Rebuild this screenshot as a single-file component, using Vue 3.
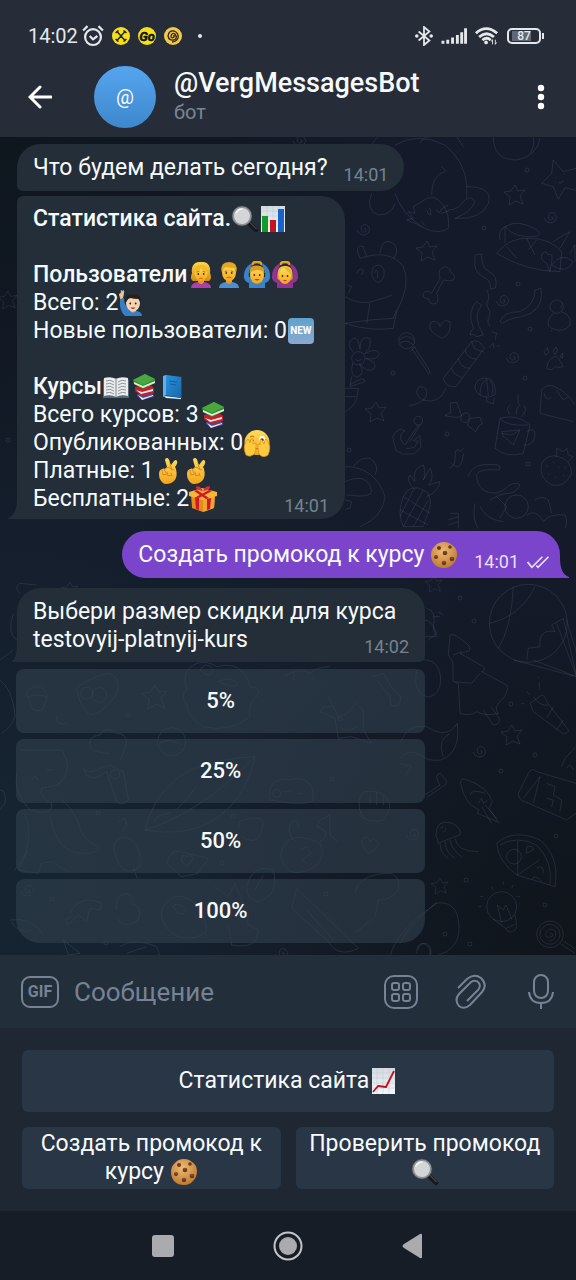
<script setup>
import { ref } from 'vue'

const draft = ref('')

const statistics = [
  { text: 'Статистика сайта.', bold: true, emoji: ['lens', 'bars'] },
  { text: '' },
  { text: 'Пользователи', bold: true, emoji: ['woman', 'man', 'man-ok', 'woman-ok'] },
  { text: 'Всего: 2', emoji: ['man-hand'] },
  { text: 'Новые пользователи: 0', badge: 'NEW' },
  { text: '' },
  { text: 'Курсы', bold: true, emoji: ['open-book', 'books', 'blue-book'] },
  { text: 'Всего курсов: 3', emoji: ['books'] },
  { text: 'Опубликованных: 0', emoji: ['peek'] },
  { text: 'Платные: 1', emoji: ['fingers', 'fingers'] },
  { text: 'Бесплатные: 2', emoji: ['gift'], time: '14:01' },
]

const discounts = ['5%', '25%', '50%', '100%']

const keyboard = [
  { label: 'Статистика сайта', emoji: 'growth', wide: true },
  { label: 'Создать промокод к курсу ', emoji: 'cookie' },
  { label: 'Проверить промокод ', emoji: 'lens' },
]

const stars = [
  [515, 195, 1], [427, 251, 1], [376, 412, 1], [512, 735, 1], [440, 886, 0.8],
  [155, 697, 1.2], [434, 584, 0.8], [8, 300, 0.9], [70, 590, 0.8],
]
const swirls = [
  [364, 229], [551, 217], [503, 300], [513, 357], [480, 751], [413, 834], [28, 890], [282, 953], [300, 140],
]
const dots = [
  [484, 228], [527, 170], [518, 284], [530, 329], [525, 378], [447, 434], [528, 464], [393, 373],
  [460, 598], [474, 621], [511, 704], [535, 755], [501, 771], [556, 836], [466, 880], [545, 905],
  [445, 934], [332, 779], [222, 863], [52, 899], [98, 813], [106, 943], [340, 719], [128, 715], [326, 894],
  [8, 440], [349, 450], [233, 816], [470, 944],
]
</script>

<template>
  <div class="phone">
    <svg class="sprite" width="0" height="0" aria-hidden="true">
      <defs>
        <linearGradient id="g-skin" x1="0" y1="0" x2="0" y2="1">
          <stop offset="0" stop-color="#ffdc5c" /><stop offset="1" stop-color="#f3a51c" />
        </linearGradient>
        <linearGradient id="g-hair" x1="0" y1="0" x2="0" y2="1">
          <stop offset="0" stop-color="#ffd84a" /><stop offset="1" stop-color="#d58b10" />
        </linearGradient>
        <linearGradient id="g-paper" x1="0" y1="0" x2="0" y2="1">
          <stop offset="0" stop-color="#d3dae1" /><stop offset="1" stop-color="#f4f6f8" />
        </linearGradient>
        <linearGradient id="g-book" x1="0" y1="0" x2="1" y2="1">
          <stop offset="0" stop-color="#2a93dc" /><stop offset="1" stop-color="#1767aa" />
        </linearGradient>
        <radialGradient id="g-cookie" cx=".45" cy=".35" r=".65">
          <stop offset="0" stop-color="#eebb73" /><stop offset="1" stop-color="#bf7a35" />
        </radialGradient>
      </defs>

      <symbol id="e-lens" viewBox="0 0 28 28">
        <path d="M17 17l8 8" stroke="#17191c" stroke-width="4.500" stroke-linecap="round" />
        <path d="M18.500 17l7 7" stroke="#5b6065" stroke-width="1" />
        <circle cx="11" cy="11" r="9" fill="#d3d5d7" stroke="#8d9297" stroke-width="2" />
        <circle cx="11" cy="11" r="10" fill="none" stroke="#44494d" stroke-width=".6" />
        <path d="M5 8q2-4 6-4" fill="none" stroke="#f4f5f6" stroke-width="1.500" stroke-linecap="round" />
      </symbol>

      <symbol id="e-bars" viewBox="0 0 28 28">
        <path d="M2 1h24v26H2z" fill="url(#g-paper)" />
        <path d="M2 6h24M2 11h24M2 16h24M2 21h24M8 1v26M14 1v26M20 1v26" stroke="#bec8d1" stroke-width=".5" />
        <path d="M3 11h6v16H3z" fill="#129b28" />
        <path d="M11 15h6v12h-6z" fill="#c61222" />
        <path d="M19 4h6v23h-6z" fill="#1763ca" />
      </symbol>

      <symbol id="e-woman" viewBox="0 0 28 28">
        <path d="M14 1C6 0 4 7 5 12c-1 3-2 6 1 8h16c3-2 2-5 1-8 1-5-1-12-9-11z" fill="url(#g-hair)" />
        <path d="M4 27q0-5 7-6h6q7 1 7 6z" fill="#ad3fa7" />
        <path d="M11 17h6v4q-3 4-6 0z" fill="#e99820" />
        <ellipse cx="14" cy="12.500" rx="6.500" ry="7.500" fill="url(#g-skin)" />
        <path d="M7 12Q7 4 14 4q7 0 7 8-5-2-7-5-2 4-7 5z" fill="#f1b92b" />
        <path d="M10 11l2-.5M18 11l-2-.5M12.500 17.500q1.500-1 3 0" stroke="#a05b0b" stroke-width=".7" fill="none" stroke-linecap="round" />
        <circle cx="11.300" cy="13" r=".9" fill="#4d2c10" /><circle cx="16.700" cy="13" r=".9" fill="#4d2c10" />
      </symbol>

      <symbol id="e-man" viewBox="0 0 28 28">
        <path d="M4 27q0-5 7-6h6q7 1 7 6z" fill="#4f8dd3" />
        <path d="M11 17h6v4q-3 4-6 0z" fill="#e99820" />
        <ellipse cx="14" cy="11.500" rx="7" ry="8.800" fill="url(#g-skin)" />
        <path d="M6.500 11Q5 1 14 1t7.500 10l-2-4q-5 0-8-1-3 1-3 2z" fill="#e3a823" />
        <path d="M10 10.500l2-.5M18 10.500l-2-.5M12 16.500q2-1 4 0" stroke="#925209" stroke-width=".7" fill="none" stroke-linecap="round" />
        <circle cx="11.300" cy="12" r=".9" fill="#4d2c10" /><circle cx="16.700" cy="12" r=".9" fill="#4d2c10" />
      </symbol>

      <symbol id="e-man-ok" viewBox="0 0 28 28">
        <path d="M10 4q-1-3 4-3t4 3" fill="none" stroke="#eaa226" stroke-width="2.500" />
        <path d="M9 2Q0 7 1 17q1 4 5 5v5h16v-5q4-1 5-5 1-10-8-15 0 3 1 5 3 3 2 9H6q-1-6 2-9 1-2 1-5z" fill="#3a83c8" />
        <ellipse cx="14" cy="14" rx="7" ry="8.800" fill="url(#g-skin)" />
        <path d="M6.500 12Q6 4.500 14 4.500t7.500 7.500q-3-3-7.500-3t-7.500 3z" fill="#d99b20" />
        <circle cx="11.300" cy="14" r=".9" fill="#4d2c10" /><circle cx="16.700" cy="14" r=".9" fill="#4d2c10" />
        <path d="M11.500 18h5q-2.500 3-5 0z" fill="#a14b17" />
      </symbol>

      <symbol id="e-woman-ok" viewBox="0 0 28 28">
        <path d="M10 4q-1-3 4-3t4 3" fill="none" stroke="#eaa226" stroke-width="2.500" />
        <path d="M9 2Q0 7 1 17q1 4 5 5v5h16v-5q4-1 5-5 1-10-8-15 0 3 1 5 3 3 2 9H6q-1-6 2-9 1-2 1-5z" fill="#903393" />
        <path d="M6.500 18Q5 5 14 5t7.500 13q-7.500 7-15 0z" fill="url(#g-hair)" />
        <ellipse cx="14" cy="15" rx="6" ry="8" fill="url(#g-skin)" />
        <path d="M7.500 14q1-7 5.500-8 3 5 7.500 7-.5-7-6.500-7-7 0-6.500 8z" fill="#eeb230" />
        <circle cx="11.500" cy="15" r=".9" fill="#4d2c10" /><circle cx="16.500" cy="15" r=".9" fill="#4d2c10" />
        <path d="M12 19h4q-2 2.500-4 0z" fill="#c23a31" />
      </symbol>

      <symbol id="e-man-hand" viewBox="0 0 28 28">
        <path d="M2 10l4-1q0 6 3 9l10 4q5 1 5 5H7Q1 22 2 10z" fill="#367fc7" />
        <path d="M2.500 9.500L1.500 5l1-.5.800 1.500V1.500l.700 3.500 1-3.500.700.5-.5 4-.7 3z" fill="#f2c6a2" stroke="#efc29d" />
        <path d="M12 19h6v3q-3 3-6 0z" fill="#deaa82" />
        <ellipse cx="15" cy="14" rx="7" ry="8.500" fill="#f6d3b4" />
        <path d="M7.500 14Q6 5 15 5t7.500 9l-2-4q-5 0-8-1-3 1-3 2z" fill="#25201f" />
        <circle cx="12.300" cy="14.500" r=".9" fill="#2a1b15" /><circle cx="17.700" cy="14.500" r=".9" fill="#2a1b15" />
        <path d="M12.500 18.500h5q-2.500 3-5 0z" fill="#9a4032" />
      </symbol>

      <symbol id="e-open-book" viewBox="0 0 28 28">
        <path d="M1 7l2-2h22l2 2v18H1z" fill="#536a79" />
        <path d="M2 5q7-2 12 1 5-3 12-1v18q-7-2-12 1-5-3-12-1z" fill="#e9ebec" />
        <path d="M14 6v18" stroke="#7f878c" />
        <path d="M4 8q4-2 8 1M4 11q4-2 8 1M4 14q4-2 8 1M4 17q4-2 8 1M4 20q4-2 8 1M16 9q4-3 8-1M16 12q4-3 8-1M16 15q4-3 8-1M16 18q4-3 8-1M16 21q4-3 8-1" stroke="#7b8388" stroke-width=".8" fill="none" />
      </symbol>

      <symbol id="e-books" viewBox="0 0 28 28">
        <path d="M7 21l14-2 3 3v2l-12 3-5-4z" fill="#4c4795" />
        <path d="M8 22l5 3 10-3v1l-11 4z" fill="#eceaf3" />
        <path d="M5 14l14-3 5 4v5l-12 3-7-5z" fill="#c4202a" />
        <path d="M6 17l6 2 11-3v2l-12 3z" fill="#f5e9e8" />
        <path d="M3 7L15 1l10 5v4l-12 6-9-5z" fill="#2c8c2f" />
        <path d="M4 9l9 4 12-5v2l-12 5-9-4z" fill="#e2eddb" />
        <path d="M3 7L15 1l10 5-12 6z" fill="#48a83e" />
      </symbol>

      <symbol id="e-blue-book" viewBox="0 0 28 28">
        <path d="M5 3l3-1 16 2v21l-2 2L5 24z" fill="#124f86" />
        <path d="M6 23l17 2v1L8 25z" fill="#eef3f8" />
        <path d="M8 2l15 2v21L8 22z" fill="url(#g-book)" />
        <path d="M5 3l3-1v20l-3 2z" fill="#5db1ec" />
        <path d="M11 8l8 1M12 11l6 1" stroke="#145d9a" />
      </symbol>

      <symbol id="e-peek" viewBox="0 0 28 28">
        <circle cx="14" cy="13.500" r="12.500" fill="url(#g-skin)" />
        <ellipse cx="19" cy="10.500" rx="3" ry="3.500" fill="#fff" />
        <circle cx="19" cy="11" r="1.800" fill="#4b3628" />
        <path d="M7 8q2-2 4 0M7 11q2 2 4 0M13 20q1.500-1 3 0" stroke="#a96c0d" fill="none" />
        <path d="M3 26q-3-7-1-11l2-4q1-2 2 0l1 3 1-4q1-1 2 0v5l2-1q2 0 1 3l-1 7q-4 5-9 2z" fill="#ffc93f" stroke="#d8911b" stroke-width=".7" />
        <path d="M25 26q3-7 1-11l-2-4q-1-2-2 0l-1 4-2-4q-1-1-2 0v5l-1-1q-2 0-1 3l1 7q4 5 9 1z" fill="#ffc93f" stroke="#d8911b" stroke-width=".7" />
      </symbol>

      <symbol id="e-fingers" viewBox="0 0 28 28">
        <path d="M9 26q-4-3-4-9 0-4 3-5 2-1 3 0l2-2-2-7q0-2 2-2t3 5l1 2 3-4q2-2 3 0t-2 6l1 2q2 8-2 12-3 3-8 3-2 0-3-1z" fill="url(#g-skin)" />
        <path d="M16 7l2 6M11 12l3-2 6 3M8 13l1 5 4-1M13 15l1 4 3-1M17 16l1 3M10 12l2 4" stroke="#cf8714" stroke-width=".9" fill="none" stroke-linecap="round" />
      </symbol>

      <symbol id="e-gift" viewBox="0 0 28 28">
        <path d="M2 10l12 4 12-4-1 13-11 4-11-4z" fill="#e58b1b" />
        <path d="M14 14l12-4-1 13-11 4z" fill="#f0a52e" />
        <path d="M0 7l13-4 15 4v4l-14 4L0 11z" fill="#f6b638" />
        <path d="M6 12l4 1v12l-3-1zM18 14l4-1-1 11-3 1zM5 6l3-1 12 8-3 1zM20 5l3 1-13 7-3-1z" fill="#cf1828" />
        <path d="M14 6Q6 5 7 1.500q4-1.500 7 4.500 3-6 7-4.500Q22 5 14 6z" fill="#e5283a" />
      </symbol>

      <symbol id="e-cookie" viewBox="0 0 28 28">
        <path d="M14 1q5 0 8 3 5 3 5 9 0 6-4 10-3 4-9 4-6 0-9-3-4-4-4-10 0-6 4-9 3-4 9-4z" fill="url(#g-cookie)" />
        <g fill="#69391d">
          <circle cx="9" cy="7" r="2" /><circle cx="20" cy="6" r="1.800" /><circle cx="15" cy="12" r="2.300" />
          <circle cx="6" cy="16" r="2" /><circle cx="22" cy="18" r="2.300" /><circle cx="14" cy="22" r="2.200" />
        </g>
        <path d="M14 11h2M5 15h2M13 21h2M21 17h2" stroke="#a3693e" stroke-width=".8" />
      </symbol>

      <symbol id="e-growth" viewBox="0 0 28 28">
        <path d="M3 1h23v26H3z" fill="url(#g-paper)" />
        <path d="M3 6h23M3 11h23M3 16h23M3 21h23M8 1v26M14 1v26M20 1v26" stroke="#c2c9d1" stroke-width=".5" />
        <path d="M4 25l5-6 8 1 8-16" stroke="#b71424" stroke-width="1.800" fill="none" stroke-linejoin="round" />
      </symbol>

      <symbol id="d-star" viewBox="-12 -12 24 24" overflow="visible">
        <path d="M0-10l3 6 7-1-5 6 3 8-7-3-7 4 1-8-6-5 7-1z" stroke-linejoin="round" />
      </symbol>
      <symbol id="d-swirl" viewBox="-10 -10 20 20" overflow="visible">
        <path d="M0 0q3-1 2 2-4 3-5-2 1-6 6-4 5 5 0 9-7 3-10-4" />
      </symbol>
    </svg>

    <header class="top">
      <div class="status">
        <span class="clock">14:02</span>
        <svg class="alarm" viewBox="0 0 20 20" aria-hidden="true">
          <circle cx="10" cy="11" r="7.200" /><path d="M1 5l4-4M19 5l-4-4M7 10l3 3 4-3" />
        </svg>
        <svg class="coin" viewBox="0 0 18 18" aria-hidden="true">
          <circle cx="9" cy="9" r="9" fill="#f7df1d" />
          <path d="M4.500 4l4.500 5 4.500-5M4.500 14L9 9l4.500 5M3.500 6l3-2.500M14.500 6l-3-2.500M3.500 12l3 2.500M14.500 12l-3 2.500" fill="none" stroke="#22210f" stroke-width="1.500" />
        </svg>
        <svg class="coin" viewBox="0 0 18 18" aria-hidden="true">
          <circle cx="9" cy="9" r="9" fill="#f7df1d" />
          <text x="9" y="13.500" text-anchor="middle" font-size="13" font-style="italic" font-weight="700" fill="#12130d" stroke="#12130d" stroke-width=".5">Go</text>
        </svg>
        <svg class="coin" viewBox="0 0 18 18" aria-hidden="true">
          <circle cx="9" cy="9" r="9" fill="#f4c94b" />
          <path d="M9 9q2-1 1 1-3 2-3-1 1-4 4-2 3 4-1 6-5 1-6-4 1-6 6-5 5 2 4 7-2 4-6 4" fill="none" stroke="#2b2415" stroke-width="1.300" />
        </svg>
        <span class="more"></span>
        <svg class="bluetooth" viewBox="0 0 20 22" aria-hidden="true">
          <path d="M4 6l12 10-6 5V1l6 5L4 16" /><circle cx="2" cy="11" r="1" /><circle cx="18" cy="11" r="1" />
        </svg>
        <svg class="signal" viewBox="0 0 27 18" aria-hidden="true">
          <path d="M2 17v-3M7 17v-4M12 17v-6.500M17 17V8M21.500 17V5M25.500 17V1" />
        </svg>
        <svg class="wifi" viewBox="0 0 26 20" aria-hidden="true">
          <path d="M1 7q11-10 23 0M4.500 11q8-7 16 0M8 14.500q5-4 9 0" />
          <circle cx="12" cy="17" r="2" class="solid" />
          <path d="M19 14v5M22 19v-5M17.500 16l1.500-2M23.500 17L22 19" class="thin" />
        </svg>
        <span class="battery">87</span>
      </div>
      <div class="title-row">
        <button class="plain back" type="button" aria-label="Назад">
          <svg width="24" height="24" viewBox="0 0 24 24"><path d="M23 12H3M12 2L2 12l10 10" /></svg>
        </button>
        <div class="avatar">@</div>
        <div class="title">
          <h1>@VergMessagesBot</h1>
          <p>бот</p>
        </div>
        <button class="plain menu" type="button" aria-label="Меню">
          <svg width="8" height="26" viewBox="0 0 8 26"><circle cx="4" cy="4" r="3.200" /><circle cx="4" cy="13" r="3.200" /><circle cx="4" cy="22" r="3.200" /></svg>
        </button>
      </div>
    </header>

    <main class="chat">
      <svg class="wallpaper" viewBox="0 137 576 818" preserveAspectRatio="xMidYMin slice" aria-hidden="true">
        <use v-for="([x, y, s], i) in stars" :key="'s' + i" href="#d-star" :x="x - 12 * s" :y="y - 12 * s" :width="24 * s" :height="24 * s" />
        <use v-for="([x, y], i) in swirls" :key="'w' + i" href="#d-swirl" :x="x - 10" :y="y - 10" width="20" height="20" />
        <circle v-for="([x, y], i) in dots" :key="'d' + i" :cx="x" :cy="y" r="2" />

        <!-- upper right field -->
        <g transform="translate(340 130) scale(.3333)" class="big">
          <path d="M90 60Q100 20 130 15M165 45q70-40 150 0 60 50 65 120v40M275 195q0-60 40-70M305 110l15 15M95 190q-20 50 20 65 40 0 50-35M165 190q20 60 80 100M380 170q80 0 65 50-20 50-100 45 50-20 60-50-10-20-30-5-20 30-50 30" />
          <path d="M245 215q35-30 65 10 20 30 15 70-30 20-70 0-40-20-55-25l20-5-15-20 20 5-5-20zM260 240q5 15 12 15 2-20-5-20M290 240q8 15 15 0M300 240l25-15M305 250l22-8M245 275l8 10" />
          <path d="M460 20q0 70 70 70 60-10 70-65M580 20q5 30-10 50M240 40q10-20 30-20M350 20l20 30" />
          <path d="M605 160l30-30 5-40 30 35 38-10M605 160l35 10 15 38 20-35 33 8M648 140v4M672 130v4M655 158q10 5 15-6" />
          <path d="M495 290q40-25 95 10 20 15-5 20-60 5-90-30zM495 290v50M480 330q-5-30 15-40M470 370q40-50 100-45 60 0 95 40l-5 60q-100 0-190-55zM500 350l30 35M560 325l25 50M590 330l-25 30M640 335q20-15 50-30l-30 50M605 375q10-20 20 0 15-10 10 20l-5 30-10-25q-20-10-15-25M635 405q30-40 65-10-20 40-65 10M690 370l15-25v50" />
          <path d="M60 385q-20-45 10-35l10 30M120 370q5-50 40-30 20 20 0 45M60 385q90-30 130 25 25 50-20 135l-10 50q-70 10-145-15l75-10 70-5 10-25M15 500q50 30 95 10 25-5 45-15M50 430q10-20 20-10l-5 15M95 435q0-30 20-30 25 5 15 40-20 30-35-10M105 430q0-15 8-5v20M20 465l15 5-10 20M90 520l-10 60" />
          <path d="M275 490l25-45q-10-30 15-35 20 5 15 15 20 10 10 25-10 5-30 0l-20 40q10 25-5 32-20 0-18-15-20 0-17-17 10-12 25 0z" />
          <path d="M405 385q-5-15 20-12 0 40 20 50 30 15 22 50l-15 5q0-30-20-35-35-20-27-58zM440 480q10 15 5 30-10 12 0 25 10 15 0 30-5 10 5 25M410 515l15 10q-30 30 5 90l-20 5q-10-10-20-5 0-10 10-20-20-50 10-80zM480 575q10-30 60-30 45-20 45-65l18-5q10 70-60 85-35 5-55 20z" />
          <circle cx="650" cy="530" r="20" /><path d="M640 550q-30 30-5 45 40 15 55-10 5-30-25-40M668 525l-8 10M635 600v5M655 600v5" />
          <path d="M305 625q-50-25-30-50 20-5 25 15 10-25 30-15 5 40-25 50z" />
          <circle cx="200" cy="632" r="24" /><path d="M178 630q20-20 44 0M180 640q20-15 40 5M215 655l50 75q8 5 3-10l-45-70zM210 665l15-15" />
          <path d="M310 745l85-110q20-10 38 20l-85 115q-30 5-38-25zM395 635l8 20 30 12M375 660q5 25 35 28M355 685q5 30 35 30M335 715q5 20 33 28M318 775q-20 50-70 35-30-20-10-40 30 0 20 30-10 20-52 28M455 605l15 5-5 20M445 655l15-15 2 15M470 648h10" />
          <circle cx="55" cy="685" r="20" /><path d="M40 668q-25-30 0-42 15-10 20 32 0-45 30-32 5 25-15 45 35-20 43 0-5 20-40 15 35 10 25 30-20 15-45-15 20 30-5 40-25 0-15-42M15 700q-30 20 0 35M35 740l-5 30 45-15q0-20-45 10M15 775h40q0 50-40 70M15 800h35M45 687q10 10 20 0" />
          <path d="M612 665l10-12 5 15-10 8zM640 665l8-14 5 10-8 13zM660 680l8-10v14zM625 695q20-25 30-10l15 25q-15 5-25 0-10 15-25 5z" />
          <path d="M405 770q5-30 40-25 25 10 20 50-20 10-35 5-25-10-25-30zM420 795q0-35 20-48l5 50M450 750q15 20 5 45M440 800v15l20 7 3-20" />
          <path d="M330 820l20-3 15 40q-10 10-50 0l18-10zM365 855q20-15 25 5-10 30-28 10zM390 865l30-3 7 20-10 5-10 18-25-20z" />
          <circle cx="235" cy="872" r="13" /><path d="M235 885l-40 60q-20-15-10-35l10-8-15-5q-20 10-22 25l10 40 20 10h35l20-20-3-35-20 15 15 2-12 18-25 5M240 885l-30 50" />
          <path d="M480 865q50-15 90 20l-20 85q-50 15-85-15zM480 865q20 25 85 20M560 905q25-15 25 10-5 35-35 30M485 905l55-5-20 45-15-15-15-10zM485 910l30 5 25-15M510 855q-15-20 0-30M530 855q-5-20 10-30-10-10-5-30M545 860q20-20 5-35" />
          <path d="M605 780q15-20 40-10 40 20 60 55M605 780l-5 70 100 25M612 790q10 30 22 10M650 780l20 30 15-10" />
          <path d="M328 1015q20-5 18-50 10-10 15 0l10-10M335 1000q30 30 35-30M605 1000q20-30 50-20 40 10 40 50-20 45-60 35-40-20-30-65zM650 980v-25l20 10 10-10 5 20 15 5-15 15M620 1005l3 5M640 995l3 5M655 1010l3 5M625 1030l3 5M645 1040l3 5M675 1010l3 5M670 1035l3 5" />
          <path d="M190 1100q20-40 60-20 25 10 20 50l-20 60h-60q-20-40 0-90zM190 1100l80 50M180 1140l85 45M220 1080l-40 80M250 1080l-60 110M265 1110l-45 80M225 1080q-30-30-15-45l15 20q-10-40 25-50 10 30 0 45l20-35q15 30-5 50l35-10q-5 30-40 45" />
          <path d="M40 1010q20-30 50-25 30 20 15 50M15 1010q90 0 120 90-5 60-75 90M15 1055q70-30 80 30-5 20-75 10M15 1110l20 5-5 20-15 3M385 1040q10-45 90-35 10 15 0 15-60-5-65 15 0 30 20 45 40 25 80-15 20-10 30 0-10 20-30 25-30 0-60 20M405 1120q-10 50 10 75M420 1130q20 40 70 45" />
          <circle cx="530" cy="1130" r="35" /><path d="M470 1100l30 30-20 35M585 1110q20-15 40 0l10 40M560 1155q30-20 50 20 20-25 65-20 10 20 0 40M330 1150h25v45M325 1170l30-10M325 1185l30-10" />
        </g>

        <!-- lower right field -->
        <g transform="translate(400 580) scale(.3333)" class="big">
          <circle cx="385" cy="130" r="117" /><path d="M340 20q-5 120-45 185M268 130Q360 110 405 20M340 240l190 50L490 115l-35 20 10 20q-50-10-45 45l-35 5-5 35M400 240l130 50L470 130M500 120l30 100" />
          <path d="M145 225l5-60q10-10 55 30 10 20-5 20l-20 5 70 40q10 10-5 15l75 40q10 20-20 50-20 20-5 35-40 10-65-5-20 15-50 5l-5-90-15-5-2-60zM160 225l25-10M165 305l50 5 25-30M250 390l30 45q20 0 18-20l-25-35" />
          <path d="M390 370l35-25q10 0 15 20l65 85q0 10-15 12L400 395zM400 350q20 30 45 25M460 380l-20 35M490 420l-20 30M415 290v5M418 305v25M380 335l10 10M363 370h10" />
          <path d="M50 240q70-10 72 60 0 40-35 52-50-10-37-80M0 490q20-60 80-50 60 40 92-10 10 90-50 110-40 5-60-15-40-20-60 10M150 460q-40 20-20 70M0 550l35 10-20 25" />
          <path d="M75 645l45-30q-20-30 0-35l10 10 10 15q0 10-10 13l-50 35M182 610q0-20 20-10 60 20 75 65l-10 20 30 45M182 610q10 60 55 80l-5 10 60 25M210 645q5-20 45-5M245 680l30 50M255 675l35 40M235 670l10-15 5 15 12-10" />
          <path d="M355 640l30-60q10-20 25-5l118 35M355 640q0 20 20 25l125 55 28-20M370 655l50-65M400 670l20-80M440 610l25 10-5 25 25 15-5 35M440 655l20 5-5 20M485 560l10-25 33-35M500 565q10-20 20 5" />
          <path d="M108 765q0-50 50-35 30 20 22 35l-15 5-50 20zM120 790q0 30 25 45M135 785q0 30 30 50M150 780q5 30 35 50M165 775q5 40 70 40M120 745l10-5M130 755q10 0 5-12" />
          <path d="M290 790q50-45 130-10 60 50 45 140l-115-35q-55-40-60-95zM300 795q50-30 110 0 50 50 40 120M353 782v103l65-45M380 800q20-5 20 10l-20 10zM410 865q20-15 20 15M395 900q10-20 30 5" /><circle cx="342" cy="830" r="22" />
          <circle cx="305" cy="980" r="45" /><path d="M280 1018l38 28q5 15 20 8 15-5 12-20l-5-30M305 1030l-13-55 18 15 8-15 18 45M318 1045l28-12" />
          <path d="M240 950h10M245 980h-10M275 920l5 10M310 905v10M340 915l-5 10M360 950h-10" />
          <circle cx="450" cy="1063" r="40" /><circle cx="450" cy="1063" r="30" /><path d="M450 1063q10-5 8 5-20 10-22-5 10-25 30-10 5 30-20 30M480 1090l45 30M488 1082l38 25M100 1130q90-20 75-110-10-60-70-50l-80 80-25 40M55 1110q0-20 25-20 20 15 10 35" />
          <path d="M80 85q30 5 20 60l10 25H75M100 110h20M115 95l15 10" />
        </g>

        <!-- field behind the discount buttons -->
        <g transform="translate(0 580) scale(.3333)" class="big">
          <path d="M85 330q20-20 50 0 10 15 5 25l-10 30q-15 15-35 0l-10-30q-10-15 0-25zM85 350q30-10 55 0M230 330q0-20 90-50 20 0 30 20 10 30-5 50-40 50-70 55-30-10-45-75z" /><circle cx="260" cy="340" r="18" /><circle cx="298" cy="345" r="22" />
          <path d="M560 330q-20-60 30-80 30-10 60 10 80-20 100 60 40 0 20 30-30 30-20 60-60 50-140 30-50-30-50-70-20-20 0-40zM600 270q20-30 40 0-10 30-40 0M655 305q40-20 60 10-20 10-60-10" />
          <path d="M850 290q50-30 80-10 20-20 60-20M880 280v20M940 290v10M1120 290l30-10 30 50q40 20 10 50M1130 300l40 50q0 40 20 25" />
          <path d="M985 350l30 60q40-10 50-40l25 20v60l25 40-60-20-40 5-10-60-45-20q10-20 35-15M1020 440q20 20 50 0M270 500q-10-30 30-35 20-30 50-5 30 0 30 30-10 30-20 50M270 500q10 20 60 20" />
          <circle cx="515" cy="485" r="42" /><path d="M480 490q30-20 65 5M0 240l40-30M0 300q40 30 45 110-10 30-40 50M60 40q-20-20 0-30l50 5M40 100q-20 60 10 80M1275 120q20 0 35 40l-25 20M170 410q0 30 30 20M185 400v10" />
        </g>
        <g transform="translate(0 760) scale(.3333)" class="big">
          <path d="M50 40q-10 60 40 110 70 20 65-20-40-20-30-45l50-10q50-50 10-105H60M95 60q10-20 20 0M140 30h20M150 170q20 110 100 110 50 0 45-20-50-20-60-70-20-50-50-70M75 160q30 80-20 170l60 10 10-30 30-5 50 30M45 330l40-60" />
          <path d="M250 25q20 20 50 0l30-10 40 20 15 85q-20 20-35 5l-30-90q-40 30-60 10z" /><circle cx="345" cy="43" r="14" />
          <path d="M435 210q20-90 90-150 70-60 240-70-30 140-140 200-80 40-190 20zM435 210Q600 160 765-10M460 190q10-30 50-30M530 150l60-70" />
          <path d="M810 120q-10-70 60-60 70-20 70 60-20 20-130 0zM850 95h20M890 100h20" /><circle cx="830" cy="100" r="12" />
          <path d="M1085 170q-20-60 10-75 60-10 75 40-5 30-20 45-40 10-65-10zM1110 100v30M1130 95v40M1150 105v30M345 245q30-30 60 5 20 30 15 70-40 30-60-5-25-40-15-70zM400 325l12 30M355 185l20-10 5 20-15 20" />
          <path d="M500 310q10-40 40-35l85 20-30 45-50 10zM545 300q0-20 15-10 10-15 20 5l-20 25zM725 230q50 30 60-20 20-50-50-30-30 0-15 25" />
          <path d="M850 260q30-50 110-10 20 40-15 70-70 40-95-10-15-20 0-50zM885 245q-30-30-10-60 20-10 20 15M960 245q40-30-10-45l10-20 30-15v60l25 20M900 270l20-10 15 20-30 20 15 10" />
          <path d="M1085 240q20-20 25 5 15-20 25 10-10 20-30 25-20-20-20-40zM740 380q20-70 80-50 20 80-50 95-30-10-30-45zM765 390l25-45M490 440q40-60 100-5 50 80 15 90-70 30-110-30-20-30-5-55zM520 440q10-20 40 10-20 30-40-10" />
          <path d="M210 460q30-60 95-30l-5 20-30-5-10 40-25-20-30 30-10-15 20-10M350 450q-10-40 30-50 25 10 15 30 35 10 20 50-40 30-65-5M645 380l40 30 20-40 20 50q30 40 15 70l35 20q0 60-80 45l-10-60M890 385l185 180q-60 30-90-20l-110-100zM920 450l80 90M1065 400q10-60 110-60 30 20 20 50-20 30-60 30l-10 50-60 50" />
          <path d="M30 480q70-10 100 45M35 485q20 40 60 25M190 540l15 45 35-5zM360 560q40-30 110 0l10 30M380 580l60-20M1170 590q20-80 140-160M1250 580q0-30 20-30 25 10 20 35M0 90q20 0 15 40L0 150" />
        </g>
      </svg>

      <article class="bubble incoming first">
        <p>Что будем делать сегодня?</p>
        <time>14:01</time>
      </article>

      <article class="bubble incoming stats">
        <p v-for="(line, i) in statistics" :key="i" :class="{ strong: line.bold }">
          <span>{{ line.text }}<svg v-for="(name, n) in line.emoji" :key="n" class="emoji" aria-hidden="true"><use :href="'#e-' + name" /></svg><span v-if="line.badge" class="badge">{{ line.badge }}</span></span>
          <time v-if="line.time">{{ line.time }}</time>
        </p>
        <svg class="tail" viewBox="0 0 10 20" aria-hidden="true"><path d="M10 0v20H1q-2 0-1-1 9-3 9-19z" /></svg>
      </article>

      <article class="bubble outgoing">
        <p>Создать промокод к курсу <svg class="emoji" aria-hidden="true"><use href="#e-cookie" /></svg></p>
        <time>14:01</time>
        <svg class="checks" viewBox="0 0 26 16" aria-hidden="true"><path d="M1 8l5 6L18 2M11 12l2 2L25 2" /></svg>
        <svg class="tail" viewBox="0 0 10 20" aria-hidden="true"><path d="M10 0v20H1q-2 0-1-1 9-3 9-19z" /></svg>
      </article>

      <section class="question">
        <article class="bubble incoming prompt">
          <p>Выбери размер скидки для курса</p>
          <p><span>testovyij-platnyij-kurs</span><time>14:02</time></p>
          <svg class="tail" viewBox="0 0 10 20" aria-hidden="true"><path d="M10 0v20H5q-2 0-1-1 5-3 5-19z" /></svg>
        </article>
        <div class="discounts">
          <button v-for="value in discounts" :key="value" type="button">{{ value }}</button>
        </div>
      </section>
    </main>

    <form class="composer" @submit.prevent>
      <button class="plain gif" type="button">GIF</button>
      <input v-model="draft" type="text" placeholder="Сообщение" aria-label="Сообщение" />
      <button class="plain" type="button" aria-label="Команды">
        <svg width="36" height="36" viewBox="0 0 36 36">
          <rect x="2" y="2" width="32" height="32" rx="9" />
          <rect x="9" y="9" width="7" height="7" rx="2" /><rect x="20" y="9" width="7" height="7" rx="2" />
          <rect x="9" y="20" width="7" height="7" rx="2" /><rect x="20" y="20" width="7" height="7" rx="2" />
        </svg>
      </button>
      <button class="plain" type="button" aria-label="Прикрепить">
        <svg width="36" height="36" viewBox="0 0 36 36">
          <path d="M5 14L14 5q7-6 14-1 7 7 1 14L17 31q-6 5-11 1-5-6 0-12L18 8q5-3 8 1 2 4-1 7L14 27" />
        </svg>
      </button>
      <button class="plain" type="button" aria-label="Голосовое сообщение">
        <svg width="36" height="36" viewBox="0 0 36 36">
          <rect x="11" y="1" width="14" height="23" rx="7" /><path d="M6 18q1 11 12 11t12-11M18 29v6" />
        </svg>
      </button>
    </form>

    <section class="keyboard">
      <button v-for="key in keyboard" :key="key.label" type="button" :class="{ wide: key.wide }">
        <span>{{ key.label }}<svg class="emoji" aria-hidden="true"><use :href="'#e-' + key.emoji" /></svg></span>
      </button>
    </section>

    <nav class="system">
      <button class="plain" type="button" aria-label="Недавние">
        <svg width="30" height="30" viewBox="0 0 30 30"><rect x="4" y="4" width="22" height="22" rx="3" /></svg>
      </button>
      <button class="plain" type="button" aria-label="Домой">
        <svg width="30" height="30" viewBox="0 0 30 30"><circle cx="15" cy="15" r="13.500" class="ring" /><circle cx="15" cy="15" r="9" /></svg>
      </button>
      <button class="plain" type="button" aria-label="Назад">
        <svg width="30" height="30" viewBox="0 0 30 30"><path d="M6 13L22 3q2-1 2 1v22q0 2-2 1L6 17q-3-2 0-4z" /></svg>
      </button>
    </nav>
  </div>
</template>

<style>
body {
  background: #171d26;
}
</style>

<style scoped>
.phone {
  display: flex;
  flex-direction: column;
  min-height: 100vh;
  color: #f7fafc;
  font-family: Roboto, "Noto Sans", sans-serif;
  font-size: 23px;
  line-height: 28px;
}

.sprite {
  position: absolute;
}

h1,
p {
  margin: 0;
}

button,
input {
  margin: 0;
  padding: 0;
  border: 0;
  color: inherit;
  font: inherit;
}

.plain {
  display: flex;
  align-items: center;
  justify-content: center;
  background: none;
}

.emoji {
  width: 28px;
  height: 28px;
  vertical-align: top;
}

.badge {
  display: inline-block;
  width: 26px;
  margin: 1px;
  border-radius: 4px;
  background: linear-gradient(#5fa3cb, #8aa9cf);
  color: #fff;
  font-size: 10px;
  font-weight: 700;
  line-height: 26px;
  text-align: center;
  vertical-align: top;
}

/* header */
.top {
  padding: 6px 28px 9px;
  background: #262d39;
}

.status {
  display: flex;
  align-items: center;
  gap: 8px;
  height: 60px;
  font-size: 20px;
  color: #e4e7ec;
}

.status svg {
  flex: none;
}

.clock {
  margin-right: -4px;
}

.alarm {
  width: 22px;
  height: 22px;
  fill: none;
  stroke: #e4e7ec;
  stroke-width: 2;
}

.coin {
  width: 18px;
  height: 18px;
  overflow: visible;
}

.more {
  width: 4px;
  height: 4px;
  margin: 0 auto 0 8px;
  border-radius: 50%;
  background: #e4e7ec;
}

.bluetooth,
.signal,
.wifi {
  fill: none;
  stroke: #e4e7ec;
  stroke-width: 2;
}

.bluetooth {
  width: 18px;
  height: 20px;
}

.signal {
  width: 26px;
  height: 18px;
  stroke-width: 3;
}

.wifi {
  width: 24px;
  height: 20px;
  stroke-width: 3;
}

.wifi .solid {
  fill: #e4e7ec;
  stroke: none;
}

.wifi .thin {
  stroke-width: 1;
}

.battery {
  position: relative;
  width: 24px;
  margin-right: 7px;
  padding: 1px 3px;
  border: 2px solid #e4e7ec;
  border-radius: 5px;
  background: linear-gradient(90deg, #626873 80%, transparent 80%) content-box;
  font-size: 12px;
  font-weight: 500;
  line-height: 10px;
  text-align: center;
}

.battery::after {
  content: "";
  position: absolute;
  top: 3px;
  right: -5px;
  width: 2px;
  height: 6px;
  background: #e4e7ec;
}

.title-row {
  display: flex;
  align-items: center;
}

.back svg {
  fill: none;
  stroke: #fff;
  stroke-width: 3;
  stroke-linecap: round;
}

.avatar {
  display: flex;
  align-items: center;
  justify-content: center;
  flex: none;
  width: 62px;
  height: 62px;
  margin: 0 18px 0 42px;
  border-radius: 50%;
  background: linear-gradient(#55a5ef, #3e88cc);
  font-size: 20px;
}

.title {
  flex: 1;
}

.title h1 {
  font-size: 27px;
  font-weight: 500;
  line-height: 30px;
}

.title p {
  color: #7c8591;
  font-size: 20px;
}

.menu {
  margin-right: 3px;
}

.menu svg {
  fill: #fff;
}

/* chat */
.chat {
  position: relative;
  isolation: isolate;
  display: flex;
  flex: 1;
  flex-direction: column;
  align-items: flex-start;
  padding: 7px 16px 11px;
  overflow: hidden;
  background:
    radial-gradient(circle at 0 0, #0e161e, transparent 40%),
    radial-gradient(circle at 100% 100%, #0f151a, transparent 40%),
    radial-gradient(circle at 0 90%, #162431, transparent 60%),
    #141a29;
}

.wallpaper {
  position: absolute;
  inset: 0;
  z-index: -1;
  width: 100%;
  height: 100%;
  fill: none;
  stroke: rgba(125, 145, 185, 0.17);
  stroke-width: 1;
}

.wallpaper .big {
  stroke-width: 3;
}

.bubble {
  position: relative;
  box-sizing: border-box;
  margin-left: 1px;
  background: #232e39;
}

.bubble time {
  flex: none;
  color: #77828e;
  font-size: 18px;
  line-height: 14px;
}

.first,
.outgoing {
  display: flex;
  align-items: flex-end;
  gap: 16px;
  padding: 10px 16px 9px;
}

.first {
  border-radius: 24px 24px 24px 6px;
}

.stats {
  min-width: 328px;
  margin-top: 5px;
  padding: 9px 16px 6px;
  border-radius: 6px 24px 24px 0;
}

.stats p {
  display: flex;
  align-items: flex-end;
  justify-content: space-between;
  min-height: 28px;
}

.strong {
  font-weight: 500;
}

.tail {
  position: absolute;
  bottom: 0;
  left: -9px;
  width: 10px;
  height: 20px;
  fill: #232e39;
}

.outgoing {
  align-self: flex-end;
  margin-top: 12px;
  padding-right: 9px;
  border-radius: 24px 24px 0 24px;
  background: #7a45cb;
}

.outgoing time {
  color: #eadfff;
}

.outgoing .tail {
  right: -9px;
  left: auto;
  fill: #7a45cb;
  transform: scaleX(-1);
}

.checks {
  width: 26px;
  height: 14px;
  margin-left: -10px;
  fill: none;
  stroke: #eadfff;
  stroke-width: 2;
}

.question {
  min-width: 409px;
  margin-top: 10px;
}

.prompt {
  padding: 10px 16px 8px;
  border-radius: 24px 24px 6px 0;
}

.prompt p {
  display: flex;
  align-items: flex-end;
  justify-content: space-between;
}

.discounts {
  display: grid;
  gap: 6px;
  margin-top: 7px;
}

.discounts button {
  height: 64px;
  border-radius: 8px;
  background: rgba(50, 65, 78, 0.6);
  font-size: 22px;
  font-weight: 500;
}

.discounts button:last-child {
  border-radius: 8px 8px 24px 24px;
}

/* composer */
.composer {
  display: flex;
  align-items: center;
  gap: 34px;
  height: 73px;
  padding: 0 17px 0 21px;
  background: #232e3b;
  color: #758394;
}

.composer svg {
  fill: none;
  stroke: #758394;
  stroke-width: 2;
}

.gif {
  box-sizing: border-box;
  width: 38px;
  height: 32px;
  margin-right: -19px;
  border: 2px solid #758394;
  border-radius: 9px;
  font-size: 16px;
  font-weight: 700;
}

.composer input {
  flex: 1;
  min-width: 0;
  outline: 0;
  background: none;
  color: #f7fafc;
  font-size: 26px;
}

.composer input::placeholder {
  color: #758394;
  opacity: 1;
}

/* reply keyboard */
.keyboard {
  display: grid;
  grid-template-columns: 1fr 1fr;
  gap: 15px;
  padding: 22px;
  background: #1e2732;
}

.keyboard button {
  min-height: 62px;
  padding: 3px 10px;
  border-radius: 6px;
  background: #293645;
}

.keyboard .wide {
  grid-column: 1 / -1;
}

/* system bar */
.system {
  display: flex;
  align-items: center;
  justify-content: center;
  gap: 95px;
  height: 69px;
  background: #171d26;
}

.system svg {
  fill: #a9abaf;
}

.system .ring {
  fill: none;
  stroke: #c3c5c8;
  stroke-width: 2;
}
</style>
